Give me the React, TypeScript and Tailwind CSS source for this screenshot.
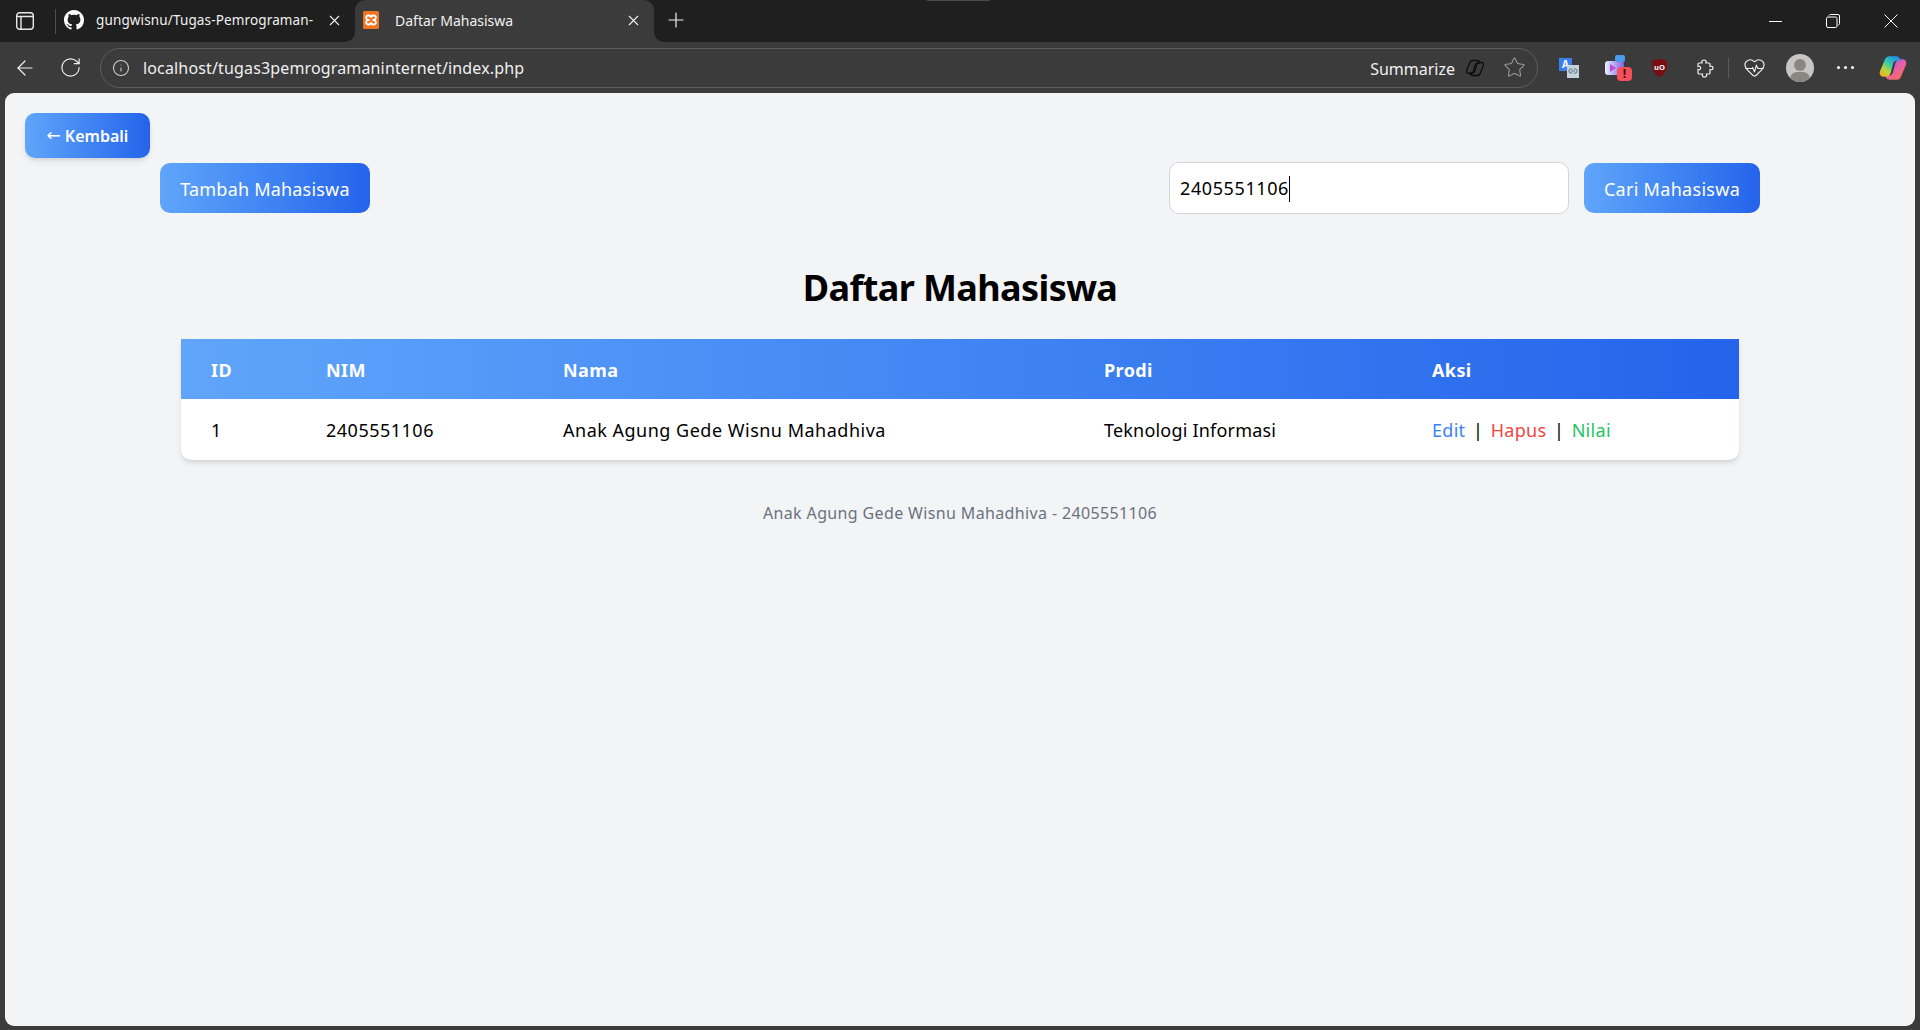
import { ArrowLeft, HeartPulse, Info, Link2, Plus, RotateCw, Star, X } from "lucide-react";

const blobPath =
  "M9 2h6c1.500 0 2.500.8 3 2l.5 1.500h-3c-2 0-3 1-3.500 3l-2 7.500c-.5 2-2 3.500-4 3.500H4c-2.500 0-4-2-3.200-4.500L5 5c.6-2 2-3 4-3z";

const Github = () => (
  <svg viewBox="0 0 16 16" className="w-[20px] h-[20px]" fill="#fff">
    <path d="M8 0C3.580 0 0 3.580 0 8c0 3.540 2.290 6.530 5.470 7.590.4.070.55-.17.55-.38 0-.19-.01-.82-.01-1.490-2.010.37-2.530-.49-2.690-.94-.09-.23-.48-.94-.82-1.130-.28-.15-.68-.52-.01-.53.63-.01 1.080.58 1.230.82.72 1.210 1.870.87 2.330.66.07-.52.28-.87.51-1.070-1.780-.2-3.640-.89-3.640-3.950 0-.87.31-1.590.82-2.150-.08-.2-.36-1.020.08-2.120 0 0 .67-.21 2.200.82.64-.18 1.320-.27 2-.27s1.360.09 2 .27c1.530-1.040 2.200-.82 2.200-.82.44 1.100.16 1.920.08 2.120.51.56.82 1.270.82 2.150 0 3.070-1.870 3.750-3.650 3.950.29.25.54.73.54 1.480 0 1.070-.01 1.930-.01 2.200 0 .21.15.46.55.38A8.010 8.010 0 0 0 16 8c0-4.420-3.580-8-8-8z" />
  </svg>
);

const Xampp = () => (
  <svg viewBox="0 0 16 18" className="w-[16px] h-[18px]">
    <rect width="16" height="18" rx="1.500" fill="#ee7622" />
    <path
      d="M5 4.500h1.500L8 6l1.500-1.500H11a2 2 0 0 1 1 3.700L10.500 9l1.500.8a2 2 0 0 1-1 3.700H9.500L8 12l-1.500 1.500H5a2 2 0 0 1-1-3.700L5.500 9 4 8.200a2 2 0 0 1 1-3.700z"
      fill="none"
      stroke="#fff"
      strokeWidth="1.800"
    />
  </svg>
);

const Copilot = () => (
  <svg viewBox="0 0 24 24" className="w-[28px] h-[28px]">
    <defs>
      <linearGradient id="cpA" x1="0.8" y1="0" x2="0.1" y2="1">
        <stop offset="0" stopColor="#1f8ff0" />
        <stop offset="0.4" stopColor="#35c8b0" />
        <stop offset="0.7" stopColor="#b8d63a" />
        <stop offset="1" stopColor="#f5a623" />
      </linearGradient>
      <linearGradient id="cpB" x1="0.1" y1="0" x2="0.9" y2="1">
        <stop offset="0" stopColor="#f27a3a" />
        <stop offset="0.45" stopColor="#ee5fa0" />
        <stop offset="1" stopColor="#9a5cf0" />
      </linearGradient>
    </defs>
    <path d={blobPath} fill="url(#cpB)" transform="rotate(180 12 12)" />
    <path d={blobPath} fill="url(#cpA)" />
  </svg>
);

const CopilotOutline = () => (
  <svg viewBox="0 0 24 24" className="w-[18px] h-[18px]" fill="none" stroke="#0c0c0c" strokeWidth="1.700">
    <path d={blobPath} />
    <path d={blobPath} transform="rotate(180 12 12)" />
  </svg>
);

const PuzzleIcon = () => (
  <svg viewBox="0 0 20 20" className="w-[20px] h-[20px]" fill="none" stroke="#f0f0f0" strokeWidth="1.200">
    <path d="M8 5C6.500 1 13.500 1 12 5h3a1 1 0 0 1 1 1v2.500C20 7 20 13 16 11.500V15a1 1 0 0 1-1 1h-2.500C14 20 7 20 8.500 16H5a1 1 0 0 1-1-1v-3.500C7.500 13 7.500 7 4 8.500V6a1 1 0 0 1 1-1z" />
  </svg>
);

const btn = "bg-gradient-to-r from-[#60a5fa] to-[#2563eb] text-white rounded-[10px]";

export default function App() {
  return (
    <div className="relative h-screen flex flex-col bg-[#3b3b3b] font-['Noto_Sans',sans-serif] overflow-hidden">
      {/* Tabs */}
      <div className="relative h-[42px] bg-[#1f1f1f] flex items-end text-[#f0f0f0] shrink-0">
        <div className="absolute left-[927px] top-0 w-[63px] h-px bg-[#4a4a4a]" />
        <div className="w-[55px] h-full flex items-center pl-[16px]">
          <svg viewBox="0 0 18 18" className="w-[18px] h-[18px]" fill="none" stroke="#e8e8e8" strokeWidth="1.400">
            <rect x="0.700" y="0.700" width="16.600" height="16.600" rx="3" />
            <path d="M0.700 4.500h16.600M5 4.500v12.800" />
          </svg>
        </div>
        <div className="w-px h-[25px] bg-[#4f4f4f] self-center" />
        <div className="w-[299px] h-full flex items-center pl-[8px] pr-[12px] pb-[2px] gap-[12px]">
          <Github />
          <span className="flex-1 whitespace-nowrap text-[13.500px] tracking-[0.14px]">gungwisnu/Tugas-Pemrograman-</span>
          <X size={17} strokeWidth={1.500} />
        </div>
        <div className="relative w-[299px] h-[42px] bg-[#3b3b3b] rounded-t-[10px] flex items-center pl-[8px] pr-[12px] pb-[2px] gap-[16px]">
          <div className="absolute -left-[10px] bottom-0 w-[10px] h-[10px] bg-[#3b3b3b]">
            <div className="w-full h-full bg-[#1f1f1f] rounded-br-[10px]" />
          </div>
          <div className="absolute -right-[10px] bottom-0 w-[10px] h-[10px] bg-[#3b3b3b]">
            <div className="w-full h-full bg-[#1f1f1f] rounded-bl-[10px]" />
          </div>
          <Xampp />
          <span className="flex-1 text-[14px]">Daftar Mahasiswa</span>
          <X size={17} strokeWidth={1.500} />
        </div>
        <div className="w-[44px] h-full flex items-center justify-center pb-[2px]">
          <Plus size={24} strokeWidth={1.200} />
        </div>
        <div className="flex-1" />
        <div className="flex items-center h-full">
          <div className="w-[58px] flex justify-center">
            <div className="w-[13px] h-px bg-white" />
          </div>
          <div className="w-[58px] flex justify-center">
            <svg viewBox="0 0 14 14" className="w-[14px] h-[14px]" fill="none" stroke="#fff" strokeWidth="1">
              <rect x="0.500" y="3" width="10.500" height="10.500" rx="1.500" />
              <path d="M3 1.500Q3.300 .5 4.500 .5h7.500Q13.500 .5 13.500 2v7.500Q13.500 10.800 12.300 11" />
            </svg>
          </div>
          <div className="w-[58px] flex justify-center">
            <svg viewBox="0 0 14 14" className="w-[14px] h-[14px]" stroke="#fff" strokeWidth="1">
              <path d="M.5 .5l13 13M13.500 .5l-13 13" />
            </svg>
          </div>
        </div>
      </div>

      {/* Toolbar */}
      <div className="h-[51px] shrink-0 flex items-center text-[#f0f0f0]">
        <div className="w-[50px] flex justify-center"><ArrowLeft size={24} strokeWidth={1.200} /></div>
        <div className="w-[41px] flex justify-center"><RotateCw size={23} strokeWidth={1.200} /></div>
        <div className="ml-[9px] w-[1438px] h-[40px] rounded-full border border-[#5e5e5e] flex items-center pl-[11px]">
          <Info size={18} strokeWidth={1.400} className="text-[#cfcfcf]" />
          <span className="flex-1 ml-[13px] text-[16px] tracking-[0.15px]">localhost/tugas3pemrogramaninternet/index.php</span>
          <span className="text-[16px] pt-[2px]">Summarize</span>
          <div className="ml-[11px]"><CopilotOutline /></div>
          <Star size={23} strokeWidth={1.100} className="text-[#9b9b9b] ml-[19px] mr-[11px]" />
        </div>
        {/* Extensions */}
        <div className="relative ml-[21px] w-[20px] h-[20px]">
          <div className="absolute left-0 top-0 w-[13px] h-[13px] bg-[#3c7ef0] text-white text-[10px] font-bold flex items-center justify-center leading-none">A</div>
          <div className="absolute right-0 bottom-0 w-[12px] h-[13px] bg-[#c4d4de] flex items-center justify-center">
            <Link2 size={10} strokeWidth={2} className="text-[#4a6070]" />
          </div>
        </div>
        <div className="relative ml-[26px] w-[27px] h-[26px]">
          <div className="absolute left-0 top-[6px] w-[19px] h-[14px] rounded-[3px] bg-gradient-to-r from-[#e8f0ff] to-[#8a5ce0]" />
          <div className="absolute left-[5px] top-[9px] w-0 h-0 border-y-[4px] border-y-transparent border-l-[6px] border-l-[#c04ad8]" />
          <div className="absolute left-[10px] top-0 w-[10px] h-[7px] rounded-[2px] bg-[#4a9af0]" />
          <div className="absolute right-0 bottom-0 w-[15px] h-[14px] rounded-[4px] bg-[#f5505a] text-[#3a0a0a] text-[12px] font-bold flex items-center justify-center leading-none">!</div>
        </div>
        <svg viewBox="0 0 18 20" className="ml-[19px] w-[17px] h-[20px]">
          <path d="M9 0 17 2.500c0 7-1 13-8 17.500C2 15.500 1 9.500 1 2.500z" fill="#7a0c14" />
          <text x="9" y="12" textAnchor="middle" fontSize="8" fontWeight="700" fill="#f5f5f5">uO</text>
        </svg>
        <div className="ml-[26px]"><PuzzleIcon /></div>
        <div className="w-px h-[20px] bg-[#5a5a5a] ml-[14px]" />
        <HeartPulse size={23} strokeWidth={1.200} className="ml-[14px]" />
        <div className="relative ml-[20px] w-[28px] h-[28px] rounded-full bg-[#c8c6c2] overflow-hidden">
          <div className="absolute left-[8px] top-[5px] w-[12px] h-[12px] rounded-full bg-[#8a8883]" />
          <div className="absolute left-[4px] top-[18px] w-[20px] h-[14px] rounded-full bg-[#8a8883]" />
        </div>
        <div className="ml-[23px] flex gap-[4px]">
          <div className="w-[3px] h-[3px] rounded-full bg-white" />
          <div className="w-[3px] h-[3px] rounded-full bg-white" />
          <div className="w-[3px] h-[3px] rounded-full bg-white" />
        </div>
        <div className="ml-[25px]"><Copilot /></div>
      </div>

      {/* Page */}
      <div className="flex-1 mx-[5px] mb-[4px] bg-[#f3f4f6] rounded-[9px] text-black">
        <div className="pt-[20px] pl-[20px]">
          <a className={`${btn} inline-flex items-center justify-center w-[125px] h-[45px] font-semibold text-[16px] shadow-md`}>
            <span className="font-['DejaVu_Sans'] font-normal text-[17px] mr-[4px]">←</span>Kembali
          </a>
        </div>
        <div className="mt-[4px] mx-[155px] flex items-center justify-between">
          <a className={`${btn} h-[50px] w-[210px] pt-[2px] flex items-center justify-center text-[18px] tracking-[0.2px]`}>Tambah Mahasiswa</a>
          <div className="flex items-center gap-[15px]">
            <div className="w-[400px] h-[52px] bg-white border border-[#d1d5db] rounded-[10px] flex items-center pl-[10px] pt-[1px] text-[18px] tracking-[0.6px]">
              2405551106<span className="w-px h-[26px] bg-black" />
            </div>
            <a className={`${btn} h-[50px] w-[176px] pt-[2px] flex items-center justify-center text-[18px] tracking-[0.3px]`}>Cari Mahasiswa</a>
          </div>
        </div>
        <h1 className="mt-[47px] text-center text-[36px] leading-[54px] font-bold tracking-[-0.6px]">Daftar Mahasiswa</h1>
        <div className="mt-[24px] mx-[176px] rounded-b-[10px] overflow-hidden shadow-md bg-white">
          <table className="w-full text-left text-[18px]">
            <thead className="bg-gradient-to-r from-[#60a5fa] to-[#2563eb] text-white">
              <tr className="h-[60px] tracking-[0.4px]">
                <th className="w-[115px] pl-[30px] pt-[2px] font-bold">ID</th>
                <th className="w-[237px] pl-[30px] pt-[2px] font-bold">NIM</th>
                <th className="w-[541px] pl-[30px] pt-[2px] font-bold">Nama</th>
                <th className="w-[328px] pl-[30px] pt-[2px] font-bold">Prodi</th>
                <th className="pl-[30px] pt-[2px] font-bold">Aksi</th>
              </tr>
            </thead>
            <tbody>
              <tr className="h-[61px]">
                <td className="pl-[30px] pt-[2px]">1</td>
                <td className="pl-[30px] pt-[2px] tracking-[0.5px]">2405551106</td>
                <td className="pl-[30px] pt-[2px] tracking-[0.5px]">Anak Agung Gede Wisnu Mahadhiva</td>
                <td className="pl-[30px] pt-[2px] tracking-[0.2px]">Teknologi Informasi</td>
                <td className="pl-[30px] pt-[2px] tracking-[0.3px]">
                  <span className="text-[#3b82f6]">Edit</span>
                  <span className="mx-[7.500px]">|</span>
                  <span className="text-[#ef4444]">Hapus</span>
                  <span className="mx-[7.500px]">|</span>
                  <span className="text-[#22c55e]">Nilai</span>
                </td>
              </tr>
            </tbody>
          </table>
        </div>
        <p className="mt-[41px] text-center text-[#6b7280] text-[16px] tracking-[0.36px]">Anak Agung Gede Wisnu Mahadhiva - 2405551106</p>
      </div>
    </div>
  );
}
